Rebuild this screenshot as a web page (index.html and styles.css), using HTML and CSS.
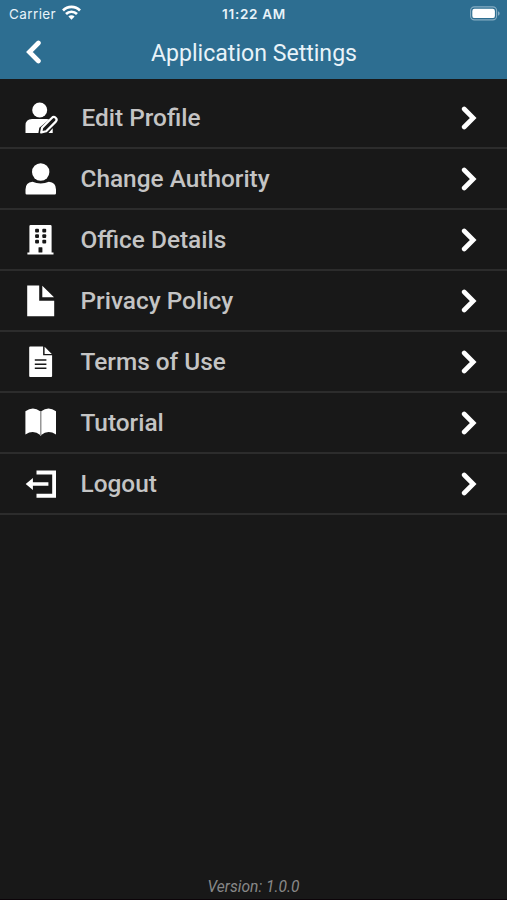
FILE: index.html
```html
<!DOCTYPE html>
<html lang="en">
<head>
  <meta charset="UTF-8">
  <meta name="viewport" content="width=device-width, initial-scale=1.0">
  <title>Application Settings</title>
  <link rel="stylesheet" href="styles.css">
</head>
<body>
  <header class="header">
    <div class="status-bar">
      <div class="carrier">
        <span>Carrier</span>
        <svg width="19" height="15" viewBox="0 0 19 15" fill="none" stroke="#fff" stroke-width="2.7">
          <path d="M1 5.5a12 12 0 0 1 17 0M4 9a7.8 7.8 0 0 1 11 0"/>
          <path d="M6.4 11.6a4.4 4.4 0 0 1 6.2 0L9.5 14.8z" fill="#fff" stroke="none"/>
        </svg>
      </div>
      <span class="time">11:22 AM</span>
      <svg class="battery" width="31" height="15" viewBox="0 0 31 15">
        <rect x="0.6" y="0.9" width="26" height="13" rx="3.8" fill="none" stroke="#86adc3" stroke-width="1.1"/>
        <rect x="2.3" y="2.7" width="22.6" height="9.4" rx="2.2" fill="#fff"/>
        <path d="M28 5.3c2.2.8 2.2 3.6 0 4.4z" fill="#86adc3"/>
      </svg>
    </div>
    <div class="title-bar">
      <svg class="back" width="16" height="24" viewBox="0 0 16 24">
        <path d="M12.4 3L3.4 12L12.4 21"/>
      </svg>
      <h1>Application Settings</h1>
    </div>
  </header>

  <ul class="menu">
    <li class="menu-item">
      <svg class="icon" viewBox="0 0 34 34">
        <circle cx="15.7" cy="10" r="7.5"/>
        <path d="M1.5 33V25.5q0-6.5 6.5-6.5h15q1.3 0 2.2.4L15.3 27.7 14.4 33zM24.5 33h4.2v-4.8z"/>
        <path class="pencil" d="M17.2 32.4l.9-4.6L27.8 18a2.6 2.6 0 0 1 4 3.6L22.2 31.2z"/>
      </svg>
      <span class="label edit">Edit Profile</span>
      <svg class="chevron" viewBox="0 0 16 24"><path d="M3.2 3L12.2 12L3.2 21"/></svg>
    </li>
    <li class="menu-item">
      <svg class="icon" viewBox="0 0 34 34">
        <circle cx="16.7" cy="11" r="8.7"/>
        <path d="M1.5 32.3v-3.8q0-7 7-7.7 3.8 1.7 8.2 1.7t8.2-1.7q7.1.7 7.1 7.7v3.8q0 1.2-1.2 1.2H2.7q-1.2 0-1.2-1.2z"/>
      </svg>
      <span class="label">Change Authority</span>
      <svg class="chevron" viewBox="0 0 16 24"><path d="M3.2 3L12.2 12L3.2 21"/></svg>
    </li>
    <li class="menu-item">
      <svg class="icon" viewBox="0 0 34 34">
        <path d="M6.6 3h19.8q1.2 0 1.2 1.2v26.3h1.9v2H3.4v-2h2V4.2Q5.4 3 6.6 3z"/>
        <g class="cut">
          <rect x="11.1" y="6.7" width="3.9" height="3.7" rx="1"/>
          <rect x="18.3" y="6.7" width="3.9" height="3.7" rx="1"/>
          <rect x="11.1" y="12.2" width="3.9" height="3.7" rx="1"/>
          <rect x="18.3" y="12.2" width="3.9" height="3.7" rx="1"/>
          <rect x="11.1" y="17.7" width="3.9" height="3.7" rx="1"/>
          <rect x="18.3" y="17.7" width="3.9" height="3.7" rx="1"/>
          <rect x="14.5" y="25.2" width="3.9" height="5.3" rx=".6"/>
        </g>
      </svg>
      <span class="label">Office Details</span>
      <svg class="chevron" viewBox="0 0 16 24"><path d="M3.2 3L12.2 12L3.2 21"/></svg>
    </li>
    <li class="menu-item">
      <svg class="icon" viewBox="0 0 34 34">
        <path d="M3.2 2.5h12v15.2h15v15.5h-27zM18.3 2.7L30 14.3H18.3z"/>
      </svg>
      <span class="label">Privacy Policy</span>
      <svg class="chevron" viewBox="0 0 16 24"><path d="M3.2 3L12.2 12L3.2 21"/></svg>
    </li>
    <li class="menu-item">
      <svg class="icon" viewBox="0 0 34 34">
        <path d="M6.1 2.6h13v8.6h9v20.9q0 .9-.9.9H6.1q-.9 0-.9-.9V3.5q0-.9.9-.9zM20.6 2.8l7.2 7.2h-7.2z"/>
        <path class="lines" d="M10.8 16.1h11.6M10.8 20.2h11.6M10.8 24.3h11.6"/>
      </svg>
      <span class="label">Terms of Use</span>
      <svg class="chevron" viewBox="0 0 16 24"><path d="M3.2 3L12.2 12L3.2 21"/></svg>
    </li>
    <li class="menu-item">
      <svg class="icon" viewBox="0 0 34 34">
        <path d="M1.4 6.2q7.6-5.6 14.8 0v23.9q-6.6-6-14.8-.7zM17.2 6.2q7.2-5.6 14.8 0v23.2q-8.2-5.3-14.8.7z"/>
        <path class="spine" d="M16.7 6v25"/>
      </svg>
      <span class="label">Tutorial</span>
      <svg class="chevron" viewBox="0 0 16 24"><path d="M3.2 3L12.2 12L3.2 21"/></svg>
    </li>
    <li class="menu-item">
      <svg class="icon" viewBox="0 0 34 34">
        <path d="M1.7 18l7.2-6v4.2h15.5v3.6H8.9V24z"/>
        <path d="M12.5 4.6H32v27.1H12.5v-3.9h15.7V8.4H12.5z"/>
      </svg>
      <span class="label">Logout</span>
      <svg class="chevron" viewBox="0 0 16 24"><path d="M3.2 3L12.2 12L3.2 21"/></svg>
    </li>
  </ul>

  <footer class="version">Version: 1.0.0</footer>
</body>
</html>
```

FILE: styles.css
```css
* {
  box-sizing: border-box;
}

body {
  display: flex;
  flex-direction: column;
  height: 100vh;
  margin: 0;
  background-color: #181818;
  color: #c4c4c4;
  font-family: Roboto, sans-serif;
  overflow: hidden;
}

.header {
  height: 79px;
  background-color: #2d6e91;
  color: #e8f3f9;
}

.status-bar {
  display: grid;
  grid-template-columns: 1fr auto 1fr;
  align-items: center;
  height: 27px;
  padding: 0 6px 0 9px;
  font-family: Inter, sans-serif;
  font-size: 13.5px;
}

.carrier {
  display: flex;
  align-items: center;
  gap: 6px;
  letter-spacing: 0.4px;
}

.carrier svg {
  margin-top: -3px;
}

.time {
  margin-right: 2px;
  font-weight: 600;
  letter-spacing: 0.7px;
}

.battery {
  justify-self: end;
}

.title-bar {
  display: grid;
  grid-template-columns: 32px 1fr 32px;
  align-items: center;
  height: 50px;
  padding: 0 25px 0 26px;
}

.title-bar h1 {
  margin: 0;
  padding-top: 2px;
  font-size: 23.1px;
  font-weight: 400;
  text-align: center;
}

.back,
.chevron {
  fill: none;
  stroke: #fff;
  stroke-width: 4.7;
  stroke-linecap: round;
}

.menu {
  flex: 1;
  margin: 0;
  padding: 9px 0 0;
  list-style: none;
}

.menu-item {
  display: flex;
  align-items: center;
  height: 61px;
  padding: 0 30px 0 24px;
  border-bottom: 2px solid #2c2c2c;
}

.icon {
  width: 34px;
  height: 34px;
  margin-top: -1px;
  fill: #fff;
}

.icon .cut {
  fill: #181818;
}

.icon .pencil {
  fill: #181818;
  stroke: #fff;
  stroke-width: 2.2;
  stroke-linejoin: round;
}

.icon .lines {
  stroke: #181818;
  stroke-width: 1.5;
}

.icon .spine {
  stroke: #aaa;
  stroke-width: 1;
}

.label {
  flex: 1;
  margin-left: 22.5px;
  font-size: 24.4px;
  font-weight: 500;
}

.label.edit {
  margin-left: 23.5px;
}

.chevron {
  width: 16px;
  height: 24px;
}

.version {
  padding-bottom: 2px;
  border-bottom: 1px solid #0c0409;
  color: #888;
  font-size: 15.6px;
  font-style: italic;
  line-height: 19px;
  text-align: center;
}
```
